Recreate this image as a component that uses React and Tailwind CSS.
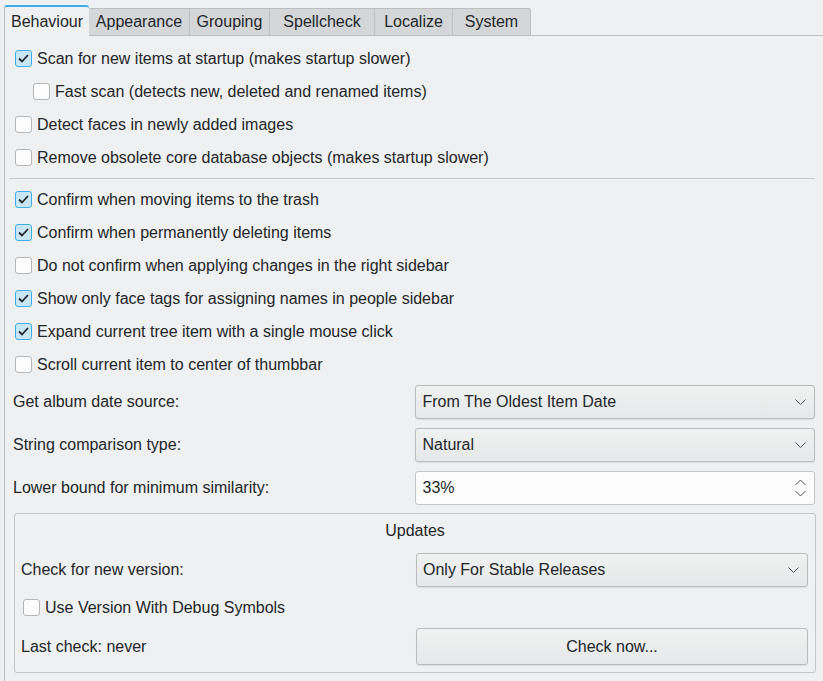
import { useState } from 'react';

const tabs = ['Behaviour', 'Appearance', 'Grouping', 'Spellcheck', 'Localize', 'System'];
const tabWidths = ['w-[85px]', 'w-[101px]', 'w-[80px]', 'w-[105px]', 'w-[78px]', 'w-[78px]'];

const Check = ({ checked, onChange }) => (
  <button
    onClick={onChange}
    className={`w-[17px] h-[17px] rounded-[3px] border flex items-center justify-center shrink-0 ${
      checked ? 'border-[#3daee9] bg-[#c9e6f5]' : 'border-[#b4b6b8] bg-[#fcfcfc]'
    }`}
  >
    {checked && (
      <svg width="11" height="9" viewBox="0 0 11 9">
        <path d="M1 4.5 L4 7.5 L10 1" fill="none" stroke="#232629" strokeWidth="1.8" />
      </svg>
    )}
  </button>
);

const CheckRow = ({ label, checked, onChange, indent }) => (
  <div className={`h-[33px] flex items-center gap-[5px] ${indent ? 'pl-[20px]' : 'pl-[2px]'}`}>
    <Check checked={checked} onChange={onChange} />
    <span>{label}</span>
  </div>
);

const Chevron = () => (
  <svg width="11" height="7" viewBox="0 0 11 7" className="shrink-0">
    <path d="M0.5 0.5 L5.5 5.5 L10.5 0.5" fill="none" stroke="#4d5154" strokeWidth="1" />
  </svg>
);

const Combo = ({ value, className = '' }) => (
  <div className={`h-[34px] rounded-[3px] border border-[#b9bbbd] bg-gradient-to-b from-[#f0f1f1] to-[#e6e8e9] flex items-center justify-between pl-[6px] pr-[8px] shadow-[0_1px_1px_rgba(0,0,0,0.08)] ${className}`}>
    <span>{value}</span>
    <Chevron />
  </div>
);

const App = () => {
  const [opts, setOpts] = useState({
    scan: true,
    fast: false,
    faces: false,
    obsolete: false,
    trash: true,
    perm: true,
    sidebar: false,
    faceTags: true,
    expand: true,
    scroll: false,
    debug: false,
  });
  const toggle = (k) => setOpts(prev => ({ ...prev, [k]: !prev[k] }));

  return (
    <div className="w-[823px] h-[681px] overflow-hidden bg-[#eff0f1] text-[#232629] text-[16px] font-['Liberation_Sans',Arial,sans-serif] pt-[4px] pl-[4px]">
      {/* Tabs */}
      <div className="flex items-end h-[31px]">
        {tabs.map((t, i) => (
          <div
            key={t}
            className={`${tabWidths[i]} flex items-center justify-center ${
              i === 0
                ? 'h-[31px] bg-[#eff0f1] border-t-2 border-t-[#3daee9] border-l border-l-[#bcbebf] rounded-t-[3px] -mb-px relative z-10'
                : `h-[27px] bg-[#d4d6d8] border-t border-r border-[#bcbebf] ${i === tabs.length - 1 ? 'rounded-tr-[3px]' : ''}`
            }`}
          >
            {t}
          </div>
        ))}
      </div>

      {/* Panel */}
      <div className="border-t border-l border-[#bcbebf] h-[700px] pl-[8px] pr-[8px] pt-[6px]">
        <CheckRow label="Scan for new items at startup (makes startup slower)" checked={opts.scan} onChange={() => toggle('scan')} />
        <CheckRow indent label="Fast scan (detects new, deleted and renamed items)" checked={opts.fast} onChange={() => toggle('fast')} />
        <CheckRow label="Detect faces in newly added images" checked={opts.faces} onChange={() => toggle('faces')} />
        <CheckRow label="Remove obsolete core database objects (makes startup slower)" checked={opts.obsolete} onChange={() => toggle('obsolete')} />

        <div className="h-[9px] flex items-center -ml-[4px]">
          <div className="h-px w-full bg-[#c5c7c8]" />
        </div>

        <CheckRow label="Confirm when moving items to the trash" checked={opts.trash} onChange={() => toggle('trash')} />
        <CheckRow label="Confirm when permanently deleting items" checked={opts.perm} onChange={() => toggle('perm')} />
        <CheckRow label="Do not confirm when applying changes in the right sidebar" checked={opts.sidebar} onChange={() => toggle('sidebar')} />
        <CheckRow label="Show only face tags for assigning names in people sidebar" checked={opts.faceTags} onChange={() => toggle('faceTags')} />
        <CheckRow label="Expand current tree item with a single mouse click" checked={opts.expand} onChange={() => toggle('expand')} />
        <CheckRow label="Scroll current item to center of thumbbar" checked={opts.scroll} onChange={() => toggle('scroll')} />

        {/* Settings grid */}
        <div className="mt-[4px] flex flex-col gap-[9px]">
          <div className="flex items-center">
            <span className="w-[403px]">Get album date source:</span>
            <Combo value="From The Oldest Item Date" className="w-[400px]" />
          </div>
          <div className="flex items-center">
            <span className="w-[403px]">String comparison type:</span>
            <Combo value="Natural" className="w-[400px]" />
          </div>
          <div className="flex items-center">
            <span className="w-[403px]">Lower bound for minimum similarity:</span>
            <div className="w-[400px] h-[34px] rounded-[3px] border border-[#c3c5c6] bg-[#fcfcfc] flex items-center justify-between pl-[6px] pr-[8px]">
              <span>33%</span>
              <svg width="11" height="18" viewBox="0 0 11 18">
                <path d="M0.5 6 L5.5 1 L10.5 6" fill="none" stroke="#4d5154" strokeWidth="1" />
                <path d="M0.5 12 L5.5 17 L10.5 12" fill="none" stroke="#4d5154" strokeWidth="1" />
              </svg>
            </div>
          </div>
        </div>

        {/* Updates group */}
        <div className="mt-[8px] ml-[1px] w-[802px] h-[160px] border border-[#c4c6c7] rounded-[3px] px-[6px]">
          <div className="h-[33px] flex items-center justify-center pt-[1px]">Updates</div>
          <div className="mt-[6px] flex items-center">
            <span className="w-[395px]">Check for new version:</span>
            <Combo value="Only For Stable Releases" className="w-[392px]" />
          </div>
          <div className="h-[41px] flex items-center gap-[5px] pl-[2px]">
            <Check checked={opts.debug} onChange={() => toggle('debug')} />
            <span>Use Version With Debug Symbols</span>
          </div>
          <div className="flex items-center">
            <span className="w-[395px]">Last check: never</span>
            <button className="w-[392px] h-[37px] rounded-[3px] border border-[#b9bbbd] bg-gradient-to-b from-[#f0f1f1] to-[#e6e8e9] shadow-[0_1px_1px_rgba(0,0,0,0.08)]">
              Check now...
            </button>
          </div>
        </div>
      </div>
    </div>
  );
};

export default App;
